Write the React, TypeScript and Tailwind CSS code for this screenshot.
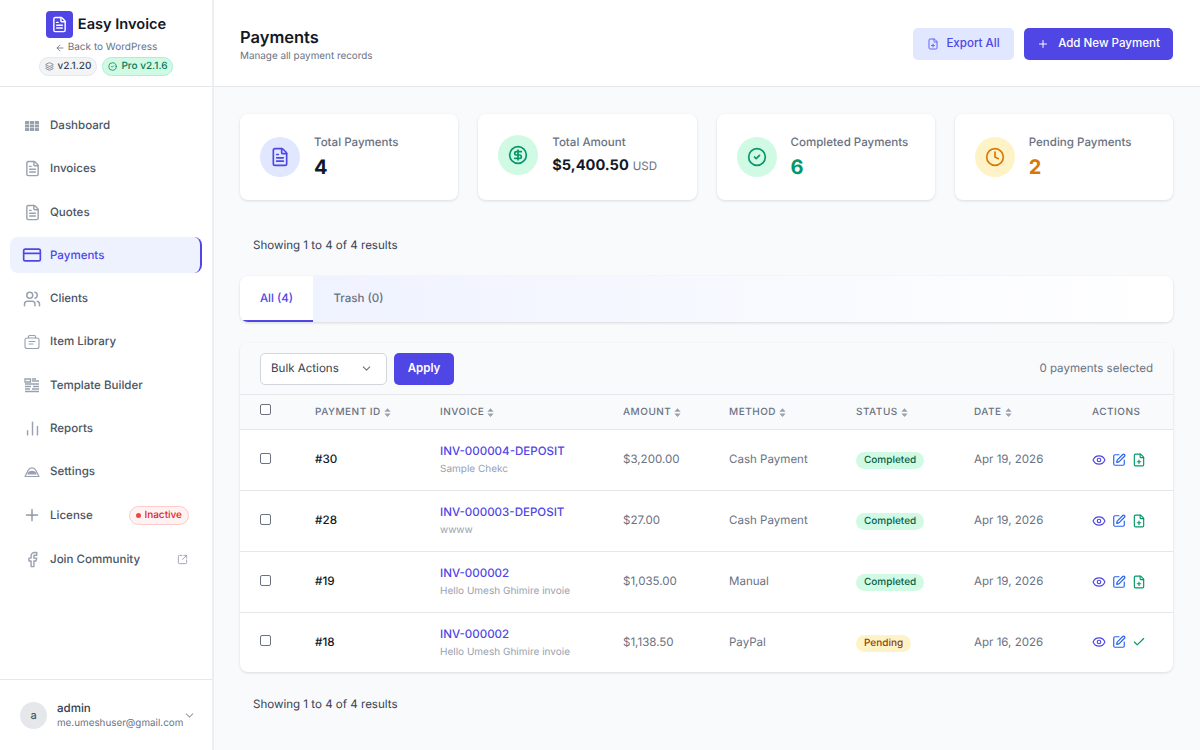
import React from "react";
import {
  ArrowLeft,
  Check,
  ChevronDown,
  CircleCheck,
  CircleDollarSign,
  Clock,
  CreditCard,
  Eye,
  Facebook,
  FilePlus,
  FileText,
  Layers,
  Plus,
  SquareArrowOutUpRight,
  SquarePen,
  Users,
  ChartNoAxesColumn,
} from "lucide-react";

type IconProps = { className?: string };

function DashIcon({ className }: IconProps) {
  return (
    <svg viewBox="0 0 14 10" className={className} fill="currentColor">
      <rect x="0" y="0" width="4.2" height="3" rx="0.6" />
      <rect x="4.9" y="0" width="4.2" height="3" />
      <rect x="9.8" y="0" width="4.2" height="3" rx="0.6" />
      <rect x="0" y="3.5" width="4.2" height="3" />
      <rect x="4.9" y="3.5" width="4.2" height="3" />
      <rect x="9.8" y="3.5" width="4.2" height="3" />
      <rect x="0" y="7" width="4.2" height="3" rx="0.6" />
      <rect x="4.9" y="7" width="4.2" height="3" />
      <rect x="9.8" y="7" width="4.2" height="3" rx="0.6" />
    </svg>
  );
}

function LibraryIcon({ className }: IconProps) {
  return (
    <svg viewBox="0 0 16 16" className={className} fill="none" stroke="currentColor" strokeWidth="1.1" strokeLinecap="round" strokeLinejoin="round">
      <rect x="1" y="4" width="14" height="10.5" rx="2" />
      <path d="M4.5 4V2.5c0-.6.4-1 1-1h5c.6 0 1 .4 1 1V4M5 7.5h6M5 10h4" />
    </svg>
  );
}

function TemplateIcon({ className }: IconProps) {
  return (
    <svg viewBox="0 0 16 16" className={className} fill="none" stroke="currentColor" strokeWidth="1.3">
      <path d="M1 2h5.5v3H1zM8 4h7M8 2h4M1 7h14M1 9.5h6M9 9.5h6M1 12h5M8 12h7M1 14.5h14" />
    </svg>
  );
}

function SettingsIcon({ className }: IconProps) {
  return (
    <svg viewBox="0 0 16 16" className={className} fill="none" stroke="currentColor" strokeWidth="1.2" strokeLinejoin="round">
      <path d="M1 12.5 4 6.5C5 4.6 6.3 3.8 8 3.8s3 .8 4 2.7l3 6H1Z" />
      <path d="M4.8 8.2c1.8-1 4.6-1 6.4 0l.9 1.8H3.9l.9-1.8Z" fill="currentColor" />
    </svg>
  );
}

function LicenseIcon({ className }: IconProps) {
  return (
    <svg viewBox="0 0 16 16" className={className} fill="currentColor">
      <path d="M7.2 1h1.6l.2 6 6 .2v1.6l-6 .2-.2 6H7.2l-.2-6-6-.2V7.2l6-.2.2-6Z" />
    </svg>
  );
}

function SortIcon() {
  return (
    <svg viewBox="0 0 8 10" className="h-[9px] w-[7px] text-gray-400" fill="currentColor">
      <path d="M4 0 7.6 4H.4L4 0ZM4 10 .4 6h7.2L4 10Z" />
    </svg>
  );
}

const NAV = [
  { label: "Dashboard", icon: DashIcon, size: "h-[10px] w-[14px]" },
  { label: "Invoices", icon: FileText, size: "h-[17px] w-[17px]" },
  { label: "Quotes", icon: FileText, size: "h-[17px] w-[17px]" },
  { label: "Payments", icon: CreditCard, size: "h-5 w-5", active: true },
  { label: "Clients", icon: Users, size: "h-[18px] w-[18px]" },
  { label: "Item Library", icon: LibraryIcon, size: "h-4 w-4" },
  { label: "Template Builder", icon: TemplateIcon, size: "h-4 w-4" },
  { label: "Reports", icon: ChartNoAxesColumn, size: "h-[17px] w-[17px]" },
  { label: "Settings", icon: SettingsIcon, size: "h-4 w-4" },
];

const STATS = [
  { label: "Total Payments", value: "4", icon: FileText, circle: "bg-[#e0e7ff]", tint: "text-[#4f46e5]", num: "text-[#111827]" },
  { label: "Total Amount", value: "$5,400.50", unit: "USD", icon: CircleDollarSign, circle: "bg-[#d1fae5]", tint: "text-[#059669]", num: "text-[#111827]" },
  { label: "Completed Payments", value: "6", icon: CircleCheck, circle: "bg-[#d1fae5]", tint: "text-[#059669]", num: "text-[#059669]" },
  { label: "Pending Payments", value: "2", icon: Clock, circle: "bg-[#fef3c7]", tint: "text-[#d97706]", num: "text-[#d97706]" },
];

const ROWS = [
  { id: "#30", invoice: "INV-000004-DEPOSIT", note: "Sample Chekc", amount: "$3,200.00", method: "Cash Payment", status: "Completed", date: "Apr 19, 2026" },
  { id: "#28", invoice: "INV-000003-DEPOSIT", note: "wwww", amount: "$27.00", method: "Cash Payment", status: "Completed", date: "Apr 19, 2026" },
  { id: "#19", invoice: "INV-000002", note: "Hello Umesh Ghimire invoie", amount: "$1,035.00", method: "Manual", status: "Completed", date: "Apr 19, 2026" },
  { id: "#18", invoice: "INV-000002", note: "Hello Umesh Ghimire invoie", amount: "$1,138.50", method: "PayPal", status: "Pending", date: "Apr 16, 2026" },
];

const HEADERS = ["PAYMENT ID", "INVOICE", "AMOUNT", "METHOD", "STATUS", "DATE"];

function Checkbox() {
  return <span className="block h-[11px] w-[11px] rounded-[2px] border border-gray-500 bg-white" />;
}

function Sidebar() {
  return (
    <aside className="flex h-[750px] w-[214px] shrink-0 flex-col border-r-2 border-[#eceef1] bg-white">
      <div className="flex h-[87px] flex-col items-center border-b border-gray-200 pt-[11px]">
        <div className="flex items-center gap-[5px]">
          <span className="flex h-[27px] w-[27px] items-center justify-center rounded-[4px] bg-[#4f46e5]">
            <FileText className="h-[17px] w-[17px] text-white" strokeWidth={2} />
          </span>
          <span className="text-[14.6px] font-semibold leading-[27px] text-[#111827]">Easy Invoice</span>
        </div>
        <div className="mt-[2px] flex items-center gap-[3px] text-[10px] leading-[15px] text-gray-500">
          <ArrowLeft className="h-[10px] w-[10px]" />
          Back to WordPress
        </div>
        <div className="mt-[2px] flex items-center gap-[5px]">
          <span className="flex h-[19px] items-center gap-[4px] rounded-full border border-gray-200 bg-gray-100 px-[5px] text-[10px] font-medium text-gray-700">
            <Layers className="h-[9px] w-[9px] text-gray-500" />
            v2.1.20
          </span>
          <span className="flex h-[19px] items-center gap-[4px] rounded-full border border-[#a7f3d0] bg-[#d1fae5] px-[5px] text-[10px] font-medium text-[#047857]">
            <CircleCheck className="h-[9px] w-[9px]" />
            Pro v2.1.6
          </span>
        </div>
      </div>

      <nav className="flex flex-1 flex-col px-[10px] pt-[20.5px]">
        {NAV.map((item) => {
          const Icon = item.icon;
          return (
            <a
              key={item.label}
              className={
                item.active
                  ? "mb-[7.33px] flex h-9 items-center rounded-lg border-r-2 border-[#4f46e5] bg-[#eef2ff] text-[#4f46e5]"
                  : "mb-[7.33px] flex h-9 items-center text-gray-600"
              }
            >
              <span className={item.active ? "flex w-10 justify-center pl-[4px] text-[#4f46e5]" : "flex w-10 justify-center pl-[4px] text-gray-400"}>
                <Icon className={item.size} />
              </span>
              <span className="text-[11.55px] font-medium">{item.label}</span>
            </a>
          );
        })}
        <a className="mb-[8px] flex h-9 items-center text-gray-600">
          <span className="flex w-10 justify-center pl-[4px] text-gray-400">
            <LicenseIcon className="h-[14px] w-[14px]" />
          </span>
          <span className="text-[11.55px] font-medium">License</span>
          <span className="ml-auto mr-[13px] flex h-[19px] items-center gap-[3px] rounded-full border border-[#fecaca] bg-[#fef2f2] px-[6px] text-[10px] font-medium text-[#dc2626]">
            <span className="h-[5px] w-[5px] rounded-full bg-[#ef4444]" />
            Inactive
          </span>
        </a>
        <a className="flex h-9 items-center text-gray-600">
          <span className="flex w-10 justify-center pl-[4px] text-gray-400">
            <Facebook className="h-[17px] w-[17px]" />
          </span>
          <span className="text-[11.55px] font-medium">Join Community</span>
          <SquareArrowOutUpRight className="ml-auto mr-[14px] h-[11px] w-[11px] text-gray-400" />
        </a>
      </nav>

      <div className="flex h-[71px] items-center border-t border-gray-200 pl-5 pr-[16px]">
        <span className="flex h-[27px] w-[27px] shrink-0 items-center justify-center rounded-full bg-gray-200 text-[11px] font-medium text-gray-600">a</span>
        <div className="ml-[10px] min-w-0">
          <div className="text-[11.55px] font-medium leading-[15px] text-gray-700">admin</div>
          <div className="text-[9.85px] leading-[14px] text-gray-500">me.umeshuser@gmail.com</div>
        </div>
        <ChevronDown className="ml-auto h-[13px] w-[13px] shrink-0 text-gray-400" />
      </div>
    </aside>
  );
}

function Stats() {
  return (
    <div className="grid grid-cols-4 gap-5">
      {STATS.map((s) => {
        const Icon = s.icon;
        return (
          <div key={s.label} className="flex h-[86px] items-center gap-[14px] rounded-lg bg-white px-5 shadow-[0_1px_3px_rgba(0,0,0,0.12)]">
            <span className={`flex h-10 w-10 shrink-0 items-center justify-center rounded-full ${s.circle} ${s.tint} ${s.unit ? "-mt-[4px]" : ""}`}>
              <Icon className="h-5 w-5" />
            </span>
            <div>
              <div className="text-[11.55px] font-medium leading-[18px] text-gray-500">{s.label}</div>
              {s.unit ? (
                <div className={`mb-[4px] mt-[2px] text-[14.6px] font-bold leading-[24px] ${s.num}`}>
                  {s.value}
                  <span className="ml-[4px] text-[11.55px] font-normal text-gray-500">{s.unit}</span>
                </div>
              ) : (
                <div className={`mt-[2px] text-[20px] font-bold leading-[28px] ${s.num}`}>{s.value}</div>
              )}
            </div>
          </div>
        );
      })}
    </div>
  );
}

function Tabs() {
  return (
    <div className="mt-[22px] flex h-[46px] overflow-hidden rounded-lg bg-gradient-to-r from-[#eef2ff] to-white shadow-[0_1px_3px_rgba(0,0,0,0.14)]">
      <div className="flex w-[73px] items-center justify-center border-b-2 border-[#4f46e5] bg-white pt-[2px] text-[11.55px] font-medium text-[#4f46e5]">All (4)</div>
      <div className="flex w-[91px] items-center justify-center text-[11.55px] font-medium text-gray-500">Trash (0)</div>
    </div>
  );
}

function PaymentsTable() {
  return (
    <div className="mt-[21px] overflow-hidden rounded-lg bg-white shadow-[0_1px_3px_rgba(0,0,0,0.12)]">
      <div className="flex h-[52px] items-center border-b border-gray-200 bg-[#f9fafb] px-5">
        <div className="flex h-8 w-[127px] items-center justify-between rounded-[5px] border border-gray-300 bg-white pl-[10px] pr-[13px] text-[11.55px] text-gray-700">
          Bulk Actions
          <ChevronDown className="h-[13px] w-[13px] text-gray-500" />
        </div>
        <button type="button" className="ml-[7px] h-8 w-[60px] rounded-[5px] bg-[#4f46e5] text-[11.55px] font-semibold text-white">Apply</button>
        <span className="ml-auto text-[11.55px] text-gray-500">0 payments selected</span>
      </div>
      <table className="w-full table-fixed border-collapse">
        <colgroup>
          <col className="w-[55px]" />
          <col className="w-[125px]" />
          <col className="w-[183px]" />
          <col className="w-[106px]" />
          <col className="w-[127px]" />
          <col className="w-[118px]" />
          <col className="w-[118px]" />
          <col />
        </colgroup>
        <thead>
          <tr className="h-[34px] border-b border-gray-200 bg-[#f9fafb]">
            <th className="pl-5 pb-[4px]"><Checkbox /></th>
            {HEADERS.map((h) => (
              <th key={h} className="px-5 pt-[1px] text-left">
                <span className="flex items-center gap-[3px] text-[10px] font-medium tracking-[0.05em] text-gray-500">
                  {h}
                  <SortIcon />
                </span>
              </th>
            ))}
            <th className="px-5 pt-[1px] text-left text-[10px] font-medium tracking-[0.05em] text-gray-500">ACTIONS</th>
          </tr>
        </thead>
        <tbody>
          {ROWS.map((r, i) => (
            <tr key={r.id} className={i < ROWS.length - 1 ? "h-[61px] border-b border-gray-200" : "h-[60px]"}>
              <td className="pl-5 pb-[3px]"><Checkbox /></td>
              <td className="px-5 pt-[1px] text-[11.67px] font-medium text-[#111827]">{r.id}</td>
              <td className="px-5">
                <div className="text-[11.55px] font-medium leading-[18px] text-[#4f46e5]">{r.invoice}</div>
                <div className="mt-[1px] text-[10px] leading-[16px] text-gray-400">{r.note}</div>
              </td>
              <td className="px-5 pt-[1px] text-[11.55px] text-gray-500">{r.amount}</td>
              <td className="px-5 pt-[1px] text-[11.55px] text-gray-500">{r.method}</td>
              <td className="px-5 pt-[2px]">
                <span className={r.status === "Completed" ? "flex h-[17px] w-fit items-center rounded-full bg-[#d1fae5] px-2 text-[10px] font-medium text-[#065f46]" : "flex h-[17px] w-fit items-center rounded-full bg-[#fef3c7] px-2 text-[10px] font-medium text-[#92400e]"}>
                  {r.status}
                </span>
              </td>
              <td className="px-5 pt-[1px] text-[11.55px] text-gray-500">{r.date}</td>
              <td className="px-5">
                <div className="flex items-center gap-[6px]">
                  <Eye className="h-[14px] w-[14px] text-[#4f46e5]" />
                  <SquarePen className="h-[14px] w-[14px] text-[#2563eb]" />
                  {r.status === "Completed" ? (
                    <FilePlus className="h-[14px] w-[14px] text-[#059669]" />
                  ) : (
                    <Check className="h-[14px] w-[14px] text-[#059669]" />
                  )}
                </div>
              </td>
            </tr>
          ))}
        </tbody>
      </table>
    </div>
  );
}

export default function App() {
  return (
    <div className="flex h-[750px] w-[1200px] overflow-hidden bg-[#f9fafb] font-['Inter',sans-serif] antialiased [text-rendering:geometricPrecision]">
      <Sidebar />
      <main className="min-w-0 flex-1">
        <header className="flex h-[87px] items-center justify-between border-b border-gray-200 bg-white pl-[26px] pr-[27px]">
          <div className="pt-[2px]">
            <h1 className="text-[16.5px] font-semibold leading-[24px] text-[#111827]">Payments</h1>
            <p className="text-[9.9px] leading-[15px] text-gray-500">Manage all payment records</p>
          </div>
          <div className="flex items-center gap-[10px] pt-[1px]">
            <button type="button" className="flex h-8 w-[101px] items-center justify-center gap-[7px] rounded-[5px] bg-[#e0e7ff] text-[11.55px] font-medium text-[#4f46e5]">
              <FilePlus className="h-3 w-3 text-[#6366f1]" />
              Export All
            </button>
            <button type="button" className="flex h-8 w-[149px] items-center justify-center gap-[9px] rounded-[5px] bg-[#4f46e5] text-[11.55px] font-medium text-white">
              <Plus className="h-3 w-3" />
              Add New Payment
            </button>
          </div>
        </header>
        <div className="pl-[26px] pr-[27px] pt-[27px]">
          <Stats />
          <p className="mt-[36px] pl-[13px] text-[11.55px] leading-[18px] text-gray-700">Showing 1 to 4 of 4 results</p>
          <Tabs />
          <PaymentsTable />
          <p className="mt-[23px] pl-[13px] text-[11.55px] leading-[18px] text-gray-700">Showing 1 to 4 of 4 results</p>
        </div>
      </main>
    </div>
  );
}
